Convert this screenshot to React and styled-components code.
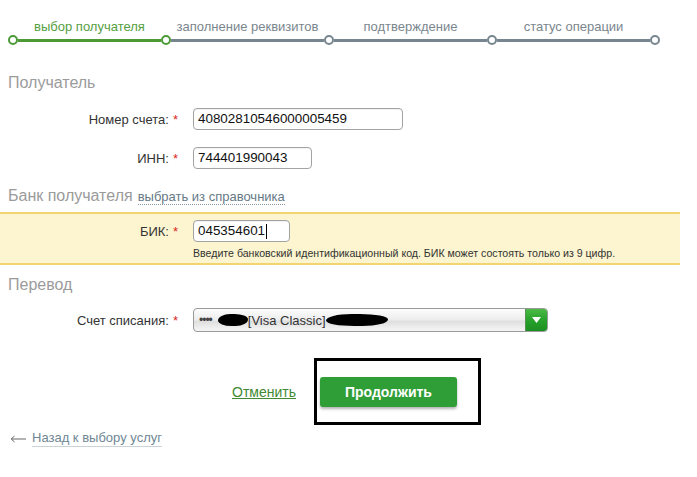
import React from "react";
import styled, { createGlobalStyle } from "styled-components";

const Global = createGlobalStyle`
  html, body { margin: 0; padding: 0; background: #fff; }
  body { font-family: "Liberation Sans", Arial, sans-serif; color: #333; }
`;

const Page = styled.div`
  width: 680px;
  padding-top: 19px;
`;

const Steps = styled.div`
  padding-left: 8px;
`;

const StepLabels = styled.div`
  display: grid;
  grid-template-columns: 153px 163px 163px 163px;
  margin-left: 5px;
`;

const StepLabel = styled.div`
  font-size: 13px;
  line-height: 16px;
  text-align: center;
  color: ${(p) => (p.$active ? "#55a03f" : "#7a868e")};
`;

const Track = styled.div`
  display: flex;
  align-items: center;
  height: 10px;
`;

const Dot = styled.span`
  box-sizing: border-box;
  width: 10px;
  height: 10px;
  border-radius: 50%;
  background: #fff;
  border: 2px solid ${(p) => (p.$active ? "#4b9a36" : "#77858e")};
  flex: none;
`;

const Line = styled.span`
  height: 3px;
  width: ${(p) => p.$w}px;
  background: ${(p) => (p.$active ? "#4b9a36" : "#77858e")};
  flex: none;
`;

const Heading = styled.div`
  padding-left: 8px;
  font-size: 16px;
  line-height: 20px;
  color: #9b9b9b;
  margin-top: ${(p) => p.$mt}px;
  display: flex;
  align-items: baseline;
  gap: 5px;
`;

const DictLink = styled.a`
  font-size: 13px;
  color: #667a86;
  text-decoration: none;
  border-bottom: 1px dotted #8a9aa4;
  line-height: 15px;
`;

const Row = styled.div`
  display: flex;
  align-items: center;
  margin-top: ${(p) => p.$mt || 0}px;
`;

const Label = styled.div`
  width: 178px;
  padding-right: 15px;
  box-sizing: content-box;
  text-align: right;
  font-size: 13px;
  color: #333;
  flex: none;
`;

const Star = styled.span`
  color: #d8281e;
  margin-left: 4px;
`;

const Input = styled.div`
  box-sizing: border-box;
  width: ${(p) => p.$w}px;
  height: 22px;
  border: 1px solid #a3a3a3;
  border-radius: 4px;
  background: #fff;
  padding: 0 4px;
  font-size: 13.4px;
  line-height: 20px;
  color: #111;
  box-shadow: inset 0 1px 1px rgba(0, 0, 0, 0.06);
  display: flex;
  align-items: center;
`;

const Caret = styled.span`
  display: inline-block;
  width: 1px;
  height: 15px;
  background: #000;
  margin-left: 1px;
`;

const Band = styled.div`
  margin-top: 6px;
  background: #fcf5cf;
  border-top: 2px solid #f2d56e;
  border-bottom: 2px solid #f2d56e;
  padding: 6px 0 3px;
`;

const Hint = styled.div`
  margin: 4px 0 0 193px;
  font-size: 10.6px;
  line-height: 14px;
  color: #333;
`;

const Select = styled.div`
  box-sizing: border-box;
  width: 355px;
  height: 24px;
  border: 1px solid #9a9a9a;
  border-radius: 4px;
  background: linear-gradient(#fdfdfd, #ececec 50%, #dedede 55%, #f6f6f6);
  display: flex;
  align-items: center;
  overflow: hidden;
`;

const SelectValue = styled.div`
  flex: 1;
  display: flex;
  align-items: center;
  padding-left: 5px;
  font-size: 13px;
  color: #333;
`;

const Mask = styled.span`
  font-size: 12px;
  letter-spacing: -1px;
  margin-right: 6px;
  color: #444;
`;

const Blob = styled.span`
  display: inline-block;
  width: ${(p) => p.$w}px;
  height: 12px;
  background: #000;
  border-radius: 45% 50% 45% 50% / 60% 50% 60% 50%;
`;

const SelectButton = styled.div`
  width: 21px;
  align-self: stretch;
  background: linear-gradient(#4cba45, #25a02a 55%, #1d8f22);
  border-left: 1px solid #5a8f55;
  display: flex;
  align-items: center;
  justify-content: center;
`;

const Actions = styled.div`
  display: flex;
  align-items: center;
  padding-left: 232px;
  margin-top: 45px;
  gap: 24px;
`;

const CancelLink = styled.a`
  font-size: 14px;
  color: #3f8a32;
  text-decoration: underline;
`;

const ButtonWrap = styled.div`
  position: relative;
`;

const Button = styled.button`
  width: 137px;
  height: 30px;
  border: none;
  border-radius: 3px;
  background: #2f9e37;
  color: #fff;
  font-family: "Liberation Sans", Arial, sans-serif;
  font-weight: bold;
  font-size: 14px;
  box-shadow: 0 2px 3px rgba(0, 0, 0, 0.3);
`;

const Highlight = styled.div`
  position: absolute;
  left: -6px;
  top: -19px;
  width: 167px;
  height: 67px;
  box-sizing: border-box;
  border: 3px solid #000;
  pointer-events: none;
`;

const Back = styled.div`
  margin-top: 23px;
  padding-left: 10px;
  display: flex;
  align-items: center;
  gap: 6px;
  font-size: 13px;
  line-height: 16px;
  color: #7b8b95;
`;

const BackLink = styled.a`
  color: #6f8794;
  text-decoration: none;
  border-bottom: 1px solid #c9d3d9;
`;

const steps = [
  { label: "выбор получателя", active: true },
  { label: "заполнение реквизитов" },
  { label: "подтверждение" },
  { label: "статус операции" },
];

export default function App() {
  return (
    <Page>
      <Global />
      <Steps>
        <StepLabels>
          {steps.map((s) => (
            <StepLabel key={s.label} $active={s.active}>
              {s.label}
            </StepLabel>
          ))}
        </StepLabels>
        <Track>
          <Dot $active />
          <Line $active $w={143} />
          <Dot $active />
          <Line $w={153} />
          <Dot />
          <Line $w={153} />
          <Dot />
          <Line $w={153} />
          <Dot />
        </Track>
      </Steps>

      <Heading $mt={28}>Получатель</Heading>
      <Row $mt={15}>
        <Label>
          Номер счета:<Star>*</Star>
        </Label>
        <Input $w={210}>40802810546000005459</Input>
      </Row>
      <Row $mt={17}>
        <Label>
          ИНН:<Star>*</Star>
        </Label>
        <Input $w={119}>744401990043</Input>
      </Row>

      <Heading $mt={17}>
        Банк получателя <DictLink>выбрать из справочника</DictLink>
      </Heading>
      <Band>
        <Row>
          <Label>
            БИК:<Star>*</Star>
          </Label>
          <Input $w={97}>
            045354601
            <Caret />
          </Input>
        </Row>
        <Hint>
          Введите банковский идентификационный код. БИК может состоять только из 9 цифр.
        </Hint>
      </Band>

      <Heading $mt={10}>Перевод</Heading>
      <Row $mt={13}>
        <Label>
          Счет списания:<Star>*</Star>
        </Label>
        <Select>
          <SelectValue>
            <Mask>••••</Mask>
            <Blob $w={30} />
            <span>[Visa Classic]</span>
            <Blob $w={62} />
          </SelectValue>
          <SelectButton>
            <svg width="9" height="6" viewBox="0 0 9 6">
              <path d="M0 0 H9 L4.5 6 Z" fill="#fff" />
            </svg>
          </SelectButton>
        </Select>
      </Row>

      <Actions>
        <CancelLink>Отменить</CancelLink>
        <ButtonWrap>
          <Button>Продолжить</Button>
          <Highlight />
        </ButtonWrap>
      </Actions>

      <Back>
        <svg width="16" height="8" viewBox="0 0 16 8">
          <path d="M16 4 H1.5 M4.5 1 L1.2 4 L4.5 7" stroke="#666" strokeWidth="1" fill="none" />
        </svg>
        <BackLink>Назад к выбору услуг</BackLink>
      </Back>
    </Page>
  );
}
